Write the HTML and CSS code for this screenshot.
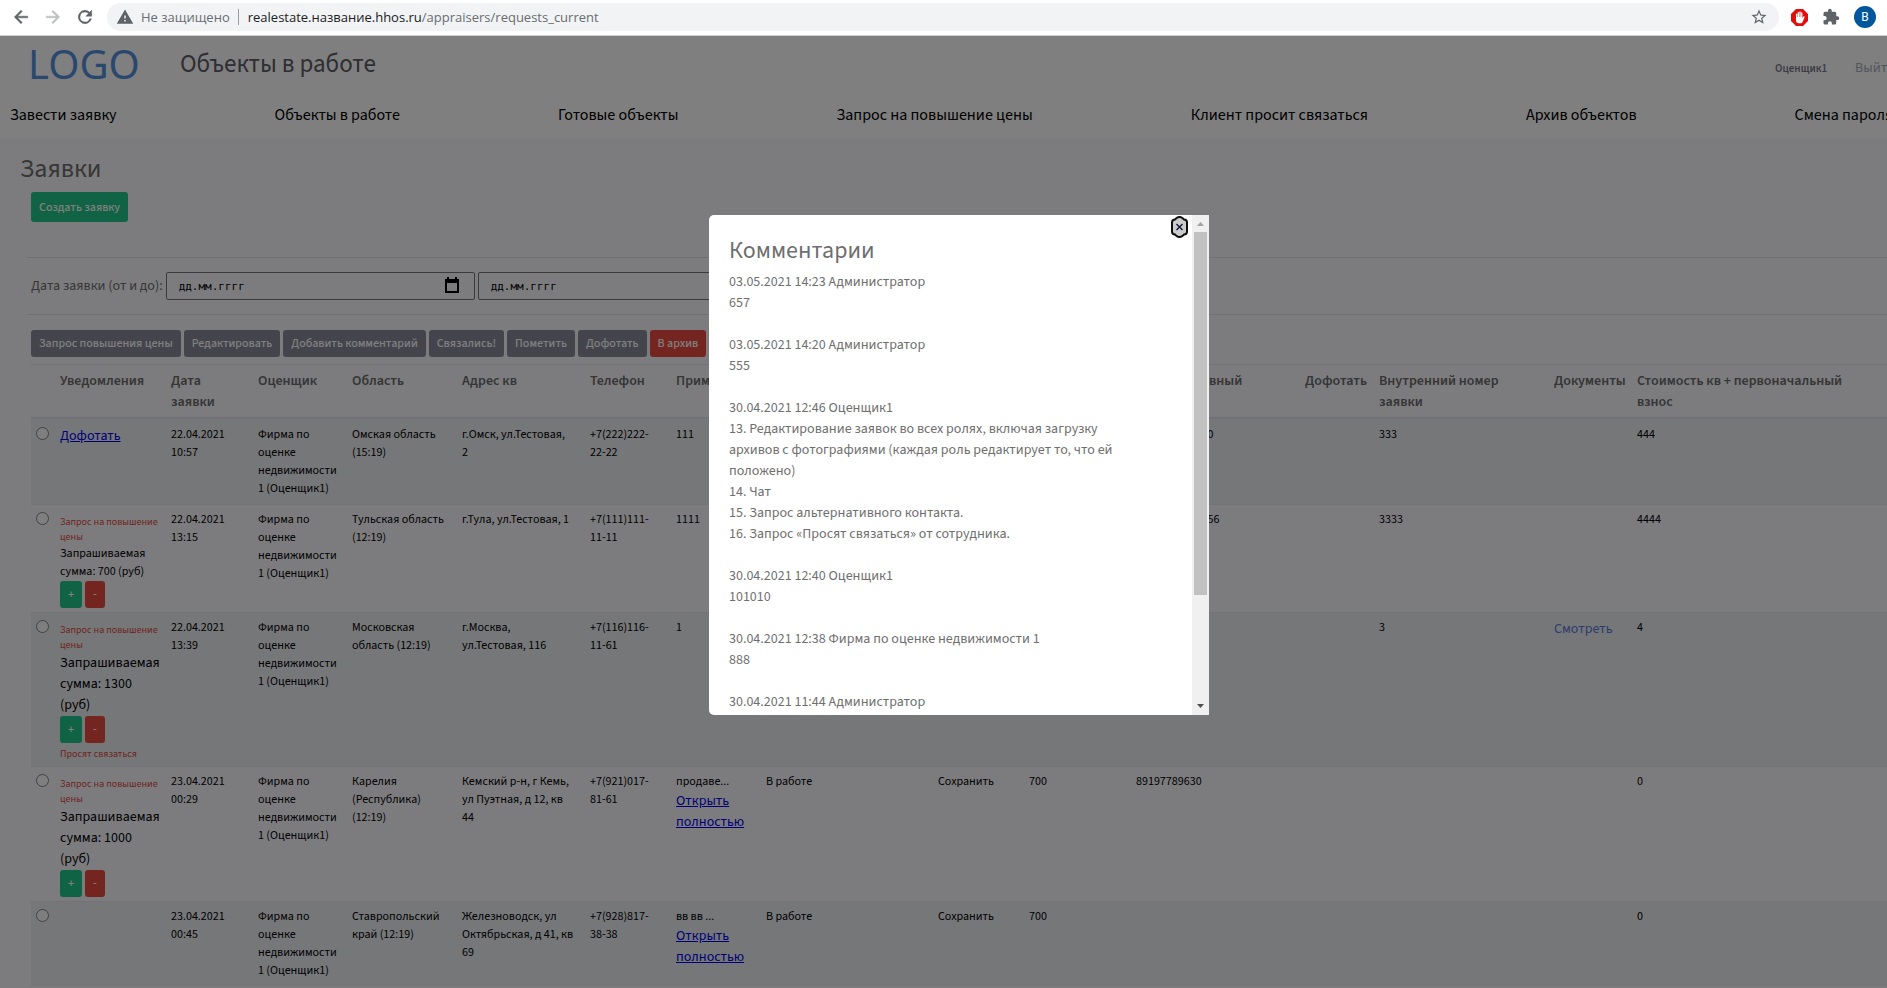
FILE: index.html
```html
<!DOCTYPE html>
<html lang="ru">
<head>
<meta charset="utf-8">
<title>Объекты в работе</title>
<link rel="stylesheet" href="styles.css">
</head>
<body>
<div class="browser">
  <button class="nav-btn" aria-label="Назад"><svg width="20" height="20" viewBox="0 0 24 24"><path fill="#5f6368" stroke="#5f6368" stroke-width=".6" d="M20 11H7.8l5.6-5.6L12 4l-8 8 8 8 1.4-1.4L7.8 13H20z"/></svg></button>
  <button class="nav-btn" aria-label="Вперёд"><svg width="20" height="20" viewBox="0 0 24 24"><path fill="#bdbfc1" stroke="#bdbfc1" stroke-width=".6" d="M4 11h12.2l-5.6-5.6L12 4l8 8-8 8-1.4-1.4 5.6-5.6H4z"/></svg></button>
  <button class="nav-btn" aria-label="Обновить"><svg width="20" height="20" viewBox="0 0 24 24"><path fill="#5f6368" stroke="#5f6368" stroke-width=".6" d="M17.65 6.35A8 8 0 1 0 19.73 14h-2.08A6 6 0 1 1 12 6c1.66 0 3.14.69 4.22 1.78L13 11h7V4z"/></svg></button>
  <div class="address">
    <svg width="18" height="18" viewBox="0 0 24 24"><path fill="#5f6368" d="M1 21h22L12 2zm12-3h-2v-2h2zm0-4h-2v-4h2z"/></svg>
    <span class="insecure">Не защищено</span>
    <span class="divider"></span>
    <span class="url"><b>realestate.название.hhos.ru</b>/appraisers/requests_current</span>
    <svg class="star" width="18" height="18" viewBox="0 0 24 24"><path fill="#5f6368" d="m22 9.24-7.19-.62L12 2 9.19 8.63 2 9.24l5.46 4.73L5.82 21 12 17.27 18.18 21l-1.63-7.03zM12 15.4l-3.76 2.27 1-4.28-3.32-2.88 4.38-.38L12 6.1l1.71 4.04 4.38.38-3.32 2.88 1 4.28z"/></svg>
  </div>
  <div class="extensions">
    <svg width="17" height="17" viewBox="0 0 17 17"><path fill="#e40d0d" d="M5 0h7l5 5v7l-5 5H5l-5-5V5z"/><path fill="#fff" d="M5 5.2c0-.9 1.3-.9 1.3 0V8h.4V3.6c0-.9 1.3-.9 1.3 0V8h.4V3c0-.9 1.3-.9 1.3 0v5h.4V4c0-.9 1.3-.9 1.3 0v5l.9-1.300c.6-.8 1.600-.3 1.200.6l-1.800 4.400c-.5 1-1.200 1.500-2.400 1.500H8c-2 0-3-1.200-3-3z"/></svg>
    <svg class="puzzle" width="18" height="18" viewBox="0 0 24 24"><path fill="#5f6368" d="M20.500 11H19V7a2 2 0 0 0-2-2h-4V3.500a2.500 2.500 0 0 0-5 0V5H4a2 2 0 0 0-2 2v3.800h1.500a2.700 2.700 0 0 1 0 5.400H2V20a2 2 0 0 0 2 2h3.800v-1.500a2.700 2.700 0 0 1 5.400 0V22H17a2 2 0 0 0 2-2v-4h1.500a2.500 2.500 0 0 0 0-5z"/></svg>
    <span class="avatar">В</span>
  </div>
</div>

<div class="viewport">
  <header class="header">
    <div class="header-top">
      <span class="logo">LOGO</span>
      <span class="page-title">Объекты в работе</span>
      <div class="user"><span class="user-name">Оценщик1</span><a class="logout" href="#">Выйти</a></div>
    </div>
    <nav class="menu">
      <a href="#">Завести заявку</a>
      <a href="#">Объекты в работе</a>
      <a href="#">Готовые объекты</a>
      <a href="#">Запрос на повышение цены</a>
      <a href="#">Клиент просит связаться</a>
      <a href="#">Архив объектов</a>
      <a href="#">Смена пароля</a>
    </nav>
  </header>

  <main class="main">
    <h1 class="heading">Заявки</h1>
    <div class="create"><button class="btn btn-create">Создать заявку</button></div>
    <div class="filter">
      <label for="from">Дата заявки (от и до):</label>
      <span class="date"><input id="from" type="text" placeholder="дд.мм.гггг"><svg width="16" height="16" viewBox="0 0 16 16"><path d="M3 0h2v2h6V0h2v2h2v14H1V2h2zM3 6v8h10V6z"/></svg></span>
      <span class="date"><input type="text" placeholder="дд.мм.гггг" aria-label="Дата заявки до"><svg width="16" height="16" viewBox="0 0 16 16"><path d="M3 0h2v2h6V0h2v2h2v14H1V2h2zM3 6v8h10V6z"/></svg></span>
    </div>
    <div class="actions">
      <button class="btn">Запрос повышения цены</button>
      <button class="btn">Редактировать</button>
      <button class="btn">Добавить комментарий</button>
      <button class="btn">Связались!</button>
      <button class="btn">Пометить</button>
      <button class="btn">Дофотать</button>
      <button class="btn btn-red">В архив</button>
    </div>

    <table class="requests">
      <colgroup>
        <col class="c-pick"><col class="c-note"><col class="c-date"><col class="c-firm"><col class="c-area"><col class="c-addr"><col class="c-phone"><col class="c-memo"><col class="c-state"><col class="c-save"><col class="c-sum"><col class="c-alt"><col class="c-photo"><col class="c-num"><col class="c-docs"><col>
      </colgroup>
      <thead>
        <tr><th></th><th>Уведомления</th><th>Дата<br>заявки</th><th>Оценщик</th><th>Область</th><th>Адрес кв</th><th>Телефон</th><th>Примеч.</th><th>Статус</th><th>Решение</th><th>Сумма</th><th>Альтернативный</th><th>Дофотать</th><th class="narrow">Внутренний номер заявки</th><th>Документы</th><th>Стоимость кв + первоначальный<br>взнос</th></tr>
      </thead>
      <tbody>
        <tr>
          <td class="pick"><input type="radio" name="row" aria-label="Омская область"></td>
          <td><a class="link" href="#">Дофотать</a></td>
          <td>22.04.2021 10:57</td><td>Фирма по оценке недвижимости 1 (Оценщик1)</td><td>Омская область (15:19)</td><td class="tight">г.Омск, ул.Тестовая,<br>2</td><td class="tight">+7(222)222-22-22</td><td>111</td><td></td><td></td><td></td><td>+790000000000</td><td></td><td>333</td><td></td><td>444</td>
        </tr>
        <tr>
          <td class="pick"><input type="radio" name="row" aria-label="Тульская область"></td>
          <td class="note"><div class="warn">Запрос на повышение цены</div><div>Запрашиваемая сумма: 700 (руб)</div><div class="pair"><button class="btn btn-plus">+</button><button class="btn btn-minus">-</button></div></td>
          <td>22.04.2021 13:15</td><td>Фирма по оценке недвижимости 1 (Оценщик1)</td><td>Тульская область (12:19)</td><td class="tight">г.Тула, ул.Тестовая, 1</td><td class="tight">+7(111)111-11-11</td><td>1111</td><td></td><td></td><td></td><td>89000000005656</td><td></td><td>3333</td><td></td><td>4444</td>
        </tr>
        <tr>
          <td class="pick"><input type="radio" name="row" aria-label="Московская область"></td>
          <td class="note"><div class="warn">Запрос на повышение цены</div><div class="sum">Запрашиваемая сумма: 1300 (руб)</div><div class="pair"><button class="btn btn-plus">+</button><button class="btn btn-minus">-</button></div><div class="ask">Просят связаться</div></td>
          <td>22.04.2021 13:39</td><td>Фирма по оценке недвижимости 1 (Оценщик1)</td><td>Московская область (12:19)</td><td class="tight">г.Москва,<br>ул.Тестовая, 116</td><td class="tight">+7(116)116-11-61</td><td>1</td><td></td><td></td><td></td><td></td><td></td><td>3</td><td><a class="see" href="#">Смотреть</a></td><td>4</td>
        </tr>
        <tr>
          <td class="pick"><input type="radio" name="row" aria-label="Карелия"></td>
          <td class="note"><div class="warn">Запрос на повышение цены</div><div class="sum">Запрашиваемая сумма: 1000 (руб)</div><div class="pair"><button class="btn btn-plus">+</button><button class="btn btn-minus">-</button></div></td>
          <td>23.04.2021 00:29</td><td>Фирма по оценке недвижимости 1 (Оценщик1)</td><td>Карелия (Республика) (12:19)</td><td class="tight">Кемский р-н, г Кемь, ул Пуэтная, д 12, кв 44</td><td class="tight">+7(921)017-81-61</td><td>продаве...<a class="link" href="#">Открыть полностью</a></td><td>В работе</td><td>Сохранить</td><td>700</td><td>89197789630</td><td></td><td></td><td></td><td>0</td>
        </tr>
        <tr>
          <td class="pick"><input type="radio" name="row" aria-label="Ставропольский край"></td>
          <td></td>
          <td>23.04.2021 00:45</td><td>Фирма по оценке недвижимости 1 (Оценщик1)</td><td>Ставропольский край (12:19)</td><td class="tight">Железноводск, ул Октябрьская, д 41, кв 69</td><td class="tight">+7(928)817-38-38</td><td>вв вв ...<a class="link" href="#">Открыть полностью</a></td><td>В работе</td><td>Сохранить</td><td>700</td><td></td><td></td><td></td><td></td><td>0</td>
        </tr>
      </tbody>
    </table>
  </main>

  <div class="overlay">
    <section class="modal" role="dialog" aria-labelledby="comments">
      <div class="modal-body">
        <h2 id="comments">Комментарии</h2>
        <p>03.05.2021 14:23 Администратор<br>657</p>
        <p>03.05.2021 14:20 Администратор<br>555</p>
        <p>30.04.2021 12:46 Оценщик1<br>13. Редактирование заявок во всех ролях, включая загрузку архивов с фотографиями (каждая роль редактирует то, что ей положено)<br>14. Чат<br>15. Запрос альтернативного контакта.<br>16. Запрос «Просят связаться» от сотрудника.</p>
        <p>30.04.2021 12:40 Оценщик1<br>101010</p>
        <p>30.04.2021 12:38 Фирма по оценке недвижимости 1<br>888</p>
        <p>30.04.2021 11:44 Администратор</p>
      </div>
      <div class="scrollbar">
        <svg width="17" height="17" viewBox="0 0 17 17"><path fill="#a3a3a3" d="M5 11l3.500-4 3.500 4z"/></svg>
        <span class="thumb"></span>
        <svg width="17" height="17" viewBox="0 0 17 17"><path fill="#505050" d="M5 6l3.500 4 3.500-4z"/></svg>
      </div>
      <button class="close" aria-label="Закрыть"><svg width="17" height="22" viewBox="0 0 17 22"><path fill="#ccc" stroke="#101010" stroke-width="2" d="M5 2.500Q8.500-.5 12 2.500L13 3.500Q16 3.500 16 6.500v9Q16 18.500 13 18.500L12 19.500Q8.500 22.500 5 19.500L4 18.500Q1 18.500 1 15.500v-9Q1 3.500 4 3.500z"/><path stroke="#101030" stroke-width="1.300" d="M5.500 8l6 6m0-6l-6 6"/></svg></button>
    </section>
  </div>
</div>
</body>
</html>
```
FILE: styles.css
```css
* { box-sizing: border-box; }
html, body { height: 100%; }
body {
  margin: 0;
  display: flex;
  flex-direction: column;
  overflow: hidden;
  font: 14px/21px "Source Sans 3", "Source Sans Pro", "Noto Sans CJK SC", sans-serif;
  color: #6f6f6f;
}
button { font-family: inherit; cursor: pointer; }
a { color: inherit; text-decoration: none; }

/* Browser bar */
.browser {
  display: flex;
  align-items: center;
  flex: none;
  height: 36px;
  padding: 0 11px 1px;
  gap: 12px;
  background: #fff;
  border-bottom: 1px solid #d0d0d0;
}
.nav-btn { display: flex; padding: 0; border: 0; background: none; }
.address {
  flex: 1;
  display: flex;
  align-items: center;
  height: 28px;
  padding: 0 11px 0 9px;
  border-radius: 14px;
  background: #f1f3f4;
  font: 13px/20px "Open Sans", sans-serif;
  color: #6a6d70;
}
.insecure { margin-left: 7px; }
.divider { width: 1px; height: 16px; margin: 0 9px 0 8px; background: #9a9da0; }
.url b { font-weight: 400; color: #202124; }
.star { margin-left: auto; }
.extensions { display: flex; align-items: center; gap: 14px; }
.puzzle { margin: 0 2px 0 0; }
.avatar {
  width: 22px;
  height: 22px;
  margin-left: -2px;
  border-radius: 50%;
  background: #00579c;
  color: #fff;
  font: 12px/22px Roboto, sans-serif;
  text-align: center;
}

/* Page */
.viewport { position: relative; flex: 1; overflow: hidden; background: #f9f9fc; }
.header { height: 102px; background: #fff; }
.header-top { display: flex; align-items: center; height: 56px; padding-left: 28px; }
.logo { width: 152px; font: 40px/40px "Noto Sans", sans-serif; color: #5590dd; }
.page-title { font-size: 25px; line-height: 30px; color: #5c5c66; }
.user { display: flex; align-items: center; gap: 28px; width: 112px; margin-left: auto; padding-top: 8px; white-space: nowrap; }
.user-name { font-size: 11px; font-weight: 600; color: #7a7a88; }
.logout { color: #aaaab8; }
.menu { display: flex; gap: 158px; padding: 11px 10px 0; font-size: 16px; line-height: 24px; white-space: nowrap; color: #000; }

.main { padding: 15px 0 0 31px; }
.heading { margin: 0 0 0 -11px; font-size: 26px; line-height: 32px; font-weight: 400; }
.create { padding-top: 7px; }
.btn {
  height: 27px;
  padding: 0 8px;
  border: 0;
  border-radius: 3px;
  background: #888898;
  color: #fff;
  font-size: 12px;
  font-weight: 500;
  white-space: nowrap;
}
.btn-create { display: block; height: 30px; background: #20c689; }
.btn-red, .btn-minus { background: #e84a3f; }
.filter {
  display: flex;
  align-items: center;
  gap: 3px;
  height: 58px;
  margin: 35px 0 15px -4px;
  padding-left: 4px;
  border: solid #e2e2ea;
  border-width: 1px 0;
}
.date { position: relative; flex: none; width: 309px; height: 28px; }
.date input {
  width: 100%;
  height: 100%;
  padding: 0 12px;
  border: 1px solid #767676;
  border-radius: 2px;
  background: transparent;
  font: 11px "DejaVu Sans Mono", monospace;
}
.date input::placeholder { color: #000; }
.date svg { position: absolute; top: 5px; right: 15px; }
.actions { display: flex; gap: 3px; margin-bottom: 7px; }

.requests { width: 100%; table-layout: fixed; border-collapse: separate; border-spacing: 0; color: #000; font-size: 12px; line-height: 18px; }
.c-pick { width: 23px; } .c-note { width: 111px; } .c-date { width: 87px; } .c-firm { width: 94px; }
.c-area { width: 110px; } .c-addr { width: 128px; } .c-phone { width: 86px; } .c-memo { width: 90px; }
.c-state { width: 172px; } .c-save { width: 91px; } .c-sum { width: 107px; } .c-alt { width: 169px; }
.c-photo { width: 74px; } .c-num { width: 175px; } .c-docs { width: 83px; }
th, td { padding: 6px 4px 6px 6px; border-top: 1px solid #e6e6ee; text-align: left; vertical-align: top; }
th { padding: 6px 0 4px 6px; border-bottom: 2px solid #e2e2ee; color: #6c6c6c; font-size: 14px; font-weight: 600; line-height: 21px; }
th.narrow { padding-right: 40px; }
.tight { padding-right: 9px; }
tbody tr:nth-child(odd) { background: #eceff2; }
tbody tr:first-child td { border-top: 0; padding-top: 7px; }
.pick { padding: 6px 0 0 5px; }
.pick input { display: block; width: 13px; height: 13px; margin: 1px 0 0; opacity: 0.9; }
.link { display: block; color: #0000ee; text-decoration: underline; font-size: 14px; line-height: 21px; }
.see { color: #5b78dc; font-size: 14px; line-height: 21px; }
.note { padding-bottom: 4px; }
.warn, .ask { padding-top: 4px; color: #e0463c; font-size: 10px; line-height: 15px; }
.sum { font-size: 14px; line-height: 21px; }
.pair { display: flex; gap: 3px; }
.btn-plus { width: 22px; padding: 0; background: #20c689; }
.btn-minus { width: 20px; padding: 0; }

/* Modal */
.overlay { position: absolute; inset: 0; display: flex; align-items: flex-start; justify-content: center; padding: 179px 0 0 31px; background: rgba(0, 0, 0, 0.5); }
.modal { position: relative; display: flex; width: 500px; height: 500px; overflow: hidden; border-radius: 5px 0 0 5px; background: #fff; }
.modal-body { flex: 1; padding: 21px 70px 0 20px; overflow: hidden; }
.modal-body h2 { margin: 0 0 6px; font-size: 24px; line-height: 30px; font-weight: 400; }
.modal-body p { margin: 0 0 21px; }
.scrollbar { display: flex; flex-direction: column; width: 17px; background: #f0f0f0; }
.scrollbar svg { flex: none; }
.thumb { height: 363px; margin: 0 2px auto; background: #c1c1c1; }
.close { position: absolute; top: 1px; right: 21px; display: flex; padding: 0; border: 0; background: none; }
```
